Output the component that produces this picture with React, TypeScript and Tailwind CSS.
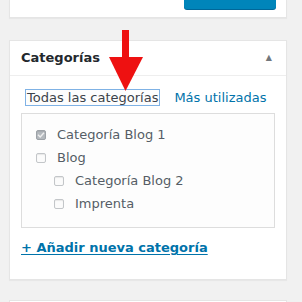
import React from 'react';

const items = [
  { label: 'Categoría Blog 1', checked: true, depth: 0 },
  { label: 'Blog', checked: false, depth: 0 },
  { label: 'Categoría Blog 2', checked: false, depth: 1 },
  { label: 'Imprenta', checked: false, depth: 1 },
];

const Checkbox = ({ checked }: { checked: boolean }) => (
  <span
    className={`flex h-[10px] w-[10px] items-center justify-center rounded-[2px] border ${
      checked ? 'border-[#9da2a7] bg-[#b4b9be]' : 'border-[#c3c6c9] bg-[#fbfbfb]'
    } shadow-[inset_0_1px_1px_rgba(0,0,0,0.08)]`}
  >
    {checked && (
      <svg width="8" height="8" viewBox="0 0 8 8">
        <path d="M1 3.8 L3.2 6 L7 1.8" stroke="#eeeeee" strokeWidth="1.4" fill="none" />
      </svg>
    )}
  </span>
);

export default function App() {
  return (
    <div
      className="relative h-[302px] w-[302px] overflow-hidden bg-[#f1f1f1] pl-[9px] pr-[15px]"
      style={{ fontFamily: '"DejaVu Sans", "Open Sans", sans-serif' }}
    >
      <div className="flex h-[18px] justify-end border-x border-b border-[#e5e5e5] bg-white pr-[10px] shadow-[0_1px_1px_rgba(0,0,0,0.04)]">
        <div className="h-[9px] w-[92px] rounded-b-[3px] bg-[#0085ba] shadow-[0_1px_0_#006799]" />
      </div>

      <div className="mt-[22px] h-[240px] border border-[#e5e5e5] bg-white shadow-[0_1px_1px_rgba(0,0,0,0.04)]">
        <div className="flex h-[35px] items-center justify-between border-b border-[#eeeeee] pl-[11px] pr-[14px]">
          <span className="text-[13px] font-bold text-[#23282d]">Categorías</span>
          <span className="text-[8px] text-[#72777c]">▲</span>
        </div>

        <div className="px-[11px] pt-[13px]">
          <div className="flex items-center gap-[14px] pl-[4px] text-[13px] leading-[15px]">
            <span className="border border-[#7fb2e5] bg-[#fdfdfd] px-[1px] text-[#3c434a]">Todas las categorías</span>
            <span className="text-[#0073aa]">Más utilizadas</span>
          </div>

          <div className="mt-[7px] h-[115px] border border-[#dddddd] bg-[#fdfdfd] pt-[9px] pl-[14px]">
            {items.map((item) => (
              <div
                key={item.label}
                className={`flex h-[23px] items-center gap-[11px] ${item.depth ? 'pl-[18px]' : ''}`}
              >
                <Checkbox checked={item.checked} />
                <span className="text-[13px] text-[#555d66]">{item.label}</span>
              </div>
            ))}
          </div>

          <div className="mt-[10px] text-[13px] font-bold text-[#0073aa] underline underline-offset-2">
            + Añadir nueva categoría
          </div>
        </div>
      </div>

      <div className="mt-[20px] h-[20px] border border-[#e5e5e5] bg-white" />

      <svg className="absolute left-[108px] top-[30px]" width="36" height="62" viewBox="0 0 36 62">
        <rect x="14" y="0" width="7" height="30" fill="#ee1111" />
        <polygon points="1,27 35,27 17.5,61" fill="#ee1111" />
      </svg>
    </div>
  );
}
